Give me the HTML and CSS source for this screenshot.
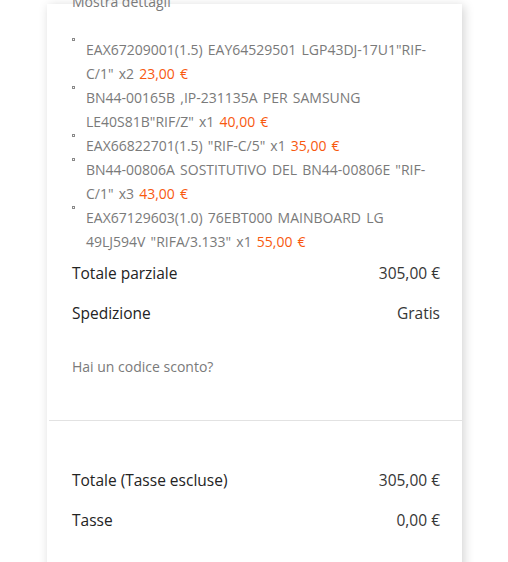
FILE: index.html
```html
<!DOCTYPE html>
<html lang="it">
<head>
<meta charset="utf-8">
<title>Riepilogo carrello</title>
<link rel="stylesheet" href="styles.css">
</head>
<body>
<div class="card">
  <div class="summary">
    <a class="toggle">Mostra dettagli</a>
    <ul class="products">
      <li><span class="bullet"></span><div class="item">EAX67209001(1.5) EAY64529501 LGP43DJ-17U1"RIF-C/1" x2 <span class="price">23,00 €</span></div></li>
      <li><span class="bullet"></span><div class="item">BN44-00165B ,IP-231135A PER SAMSUNG LE40S81B"RIF/Z" x1 <span class="price">40,00 €</span></div></li>
      <li><span class="bullet"></span><div class="item">EAX66822701(1.5) "RIF-C/5" x1 <span class="price">35,00 €</span></div></li>
      <li><span class="bullet"></span><div class="item">BN44-00806A SOSTITUTIVO DEL BN44-00806E "RIF-C/1" x3 <span class="price">43,00 €</span></div></li>
      <li><span class="bullet"></span><div class="item">EAX67129603(1.0) 76EBT000 MAINBOARD LG 49LJ594V "RIFA/3.133" x1 <span class="price">55,00 €</span></div></li>
    </ul>
    <div class="row first"><span class="label">Totale parziale</span><span class="value">305,00 €</span></div>
    <div class="row"><span class="label">Spedizione</span><span class="value">Gratis</span></div>
    <p class="promo">Hai un codice sconto?</p>
  </div>
  <hr class="divider">
  <div class="totals">
    <div class="row first"><span class="label">Totale (Tasse escluse)</span><span class="value">305,00 €</span></div>
    <div class="row"><span class="label">Tasse</span><span class="value">0,00 €</span></div>
  </div>
</div>
</body>
</html>
```

FILE: styles.css
```css
html, body {
  margin: 0;
  padding: 0;
  background: #ffffff;
  overflow: hidden;
}

body {
  font-family: "Open Sans", "Noto Sans", sans-serif;
  color: #7a7a7a;
  height: 562px;
}

.card {
  margin: 4px 0 0 47px;
  width: 415px;
  min-height: 600px;
  background: #ffffff;
  box-shadow: 2px 2px 10px 0 rgba(0, 0, 0, 0.18);
}

.summary {
  display: flex;
  flex-direction: column;
  padding: 0 22px 41px 25px;
}

.toggle {
  display: block;
  margin-top: -14px;
  font-size: 14px;
  line-height: 24px;
  color: #7a7a7a;
}

.products {
  list-style: none;
  margin: 24px -6px 0 0;
  padding: 0;
}

.products li {
  display: flex;
  align-items: flex-start;
}

.bullet {
  flex: none;
  width: 1px;
  height: 1px;
  margin-top: 0;
  margin-right: 11px;
  border: 1px solid #8a8a8a;
  background: #ffffff;
}

.item {
  font-size: 14px;
  line-height: 24px;
  word-spacing: 1.5px;
  color: #7a7a7a;
}

.price {
  color: #f8590f;
}

.row {
  display: flex;
  justify-content: space-between;
  font-size: 15.5px;
  line-height: 24px;
  color: #232323;
  margin-top: 16px;
}

.summary .row.first {
  margin-top: 7px;
}

.value {
  color: #363636;
}

.promo {
  margin: 30px 0 0 0;
  font-size: 14px;
  line-height: 24px;
  color: #7a7a7a;
}

.divider {
  margin: 0 0 0 2px;
  border: 0;
  border-top: 1px solid #e2e2e2;
  height: 0;
}

.totals {
  display: flex;
  flex-direction: column;
  padding: 0 22px 20px 25px;
}

.totals .row.first {
  margin-top: 47px;
}
```
